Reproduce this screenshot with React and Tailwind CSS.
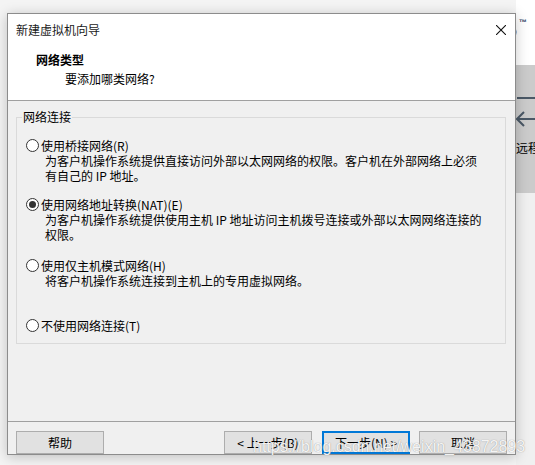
import React from 'react'

const Radio = ({ checked }) => (
    <span className="w-[13px] h-[13px] rounded-full border border-[#333333] bg-white flex items-center justify-center shrink-0">
        {checked && <span className="w-[7px] h-[7px] rounded-full bg-[#333333]" />}
    </span>
)

const Option = ({ label, checked, lines, className }) => (
    <div className={className}>
        <div className="flex items-center h-[15px] pl-[9px] gap-[2px]">
            <Radio checked={checked} />
            <span className="leading-[15px]">{label}</span>
        </div>
        {lines.map((t, i) => (
            <div key={i} className="pl-[28px] leading-[15px] h-[15px]">{t}</div>
        ))}
    </div>
)

const Button = ({ children, primary, className }) => (
    <button
        className={
            'w-[88px] h-[23px] bg-[#e1e1e1] text-[12px] leading-none text-black flex items-center justify-center ' +
            (primary ? 'border-2 border-[#0078d7] ' : 'border border-[#adadad] ') +
            (className || '')
        }
    >
        {children}
    </button>
)

const App = () => {
    return (
        <div className="relative w-[535px] h-[465px] overflow-hidden bg-[#f4f4f4] font-['Noto_Sans_CJK_SC',sans-serif] text-[12px] text-black">
            {/* background window peeking out on the right */}
            <div className="absolute left-[516px] top-0 w-[19px] h-full flex flex-col">
                <div className="relative h-[65px] bg-white">
                    <svg className="absolute left-[-3px] top-[26px]" width="5" height="12" viewBox="0 0 5 12">
                        <path d="M1 1 Q4 6 1 11" fill="none" stroke="#1e5fa8" strokeWidth="2" />
                    </svg>
                    <span className="absolute left-[3px] top-[19px] text-[8px] font-bold leading-none text-[#1f3a5f] font-['Liberation_Sans',sans-serif]">™</span>
                </div>
                <div className="h-[128px] bg-[#cbcbcb] flex flex-col">
                    <div className="mt-[32px] ml-[1px] h-[2px] bg-[#4a5866]" />
                    <svg className="mt-[12px]" width="19" height="16" viewBox="0 0 19 16">
                        <path d="M8 1 L1 8 L8 15 M1 8 H19" fill="none" stroke="#4a5866" strokeWidth="2" />
                    </svg>
                    <span className="mt-[13px] whitespace-nowrap leading-[15px]">远程</span>
                </div>
                <div className="flex-1 bg-[#f0f0f0]" />
            </div>

            {/* dialog window */}
            <div className="absolute left-[7px] top-[13px] w-[509px] h-[442px] border border-[#8c8c8c] bg-[#f0f0f0] flex flex-col shadow-[0_2px_12px_rgba(0,0,0,0.22)]">
                {/* header */}
                <div className="h-[88px] bg-white border-b border-[#a0a0a0] box-content pl-[8px] pr-[9px] pt-0 flex flex-col">
                    <div className="mt-[8px] h-[16px] flex items-center justify-between">
                        <span className="leading-[16px] text-[#1a1a1a]">新建虚拟机向导</span>
                        <svg width="10" height="10" viewBox="0 0 10 10">
                            <path d="M0 0 L10 10 M10 0 L0 10" stroke="#111" strokeWidth="1.1" />
                        </svg>
                    </div>
                    <div className="mt-[14px] ml-[20px] h-[16px] leading-[16px] font-bold">网络类型</div>
                    <div className="mt-[3px] ml-[49px] h-[16px] leading-[16px]">要添加哪类网络?</div>
                </div>

                {/* body */}
                <div className="h-[310px] pl-[8px] pr-[9px] pt-[16px] border-b border-[#a0a0a0] box-content">
                    <div className="relative border border-[#dadada] pt-[20px] pb-[10px]">
                        <span className="absolute left-[5px] top-[-9px] px-[1px] bg-[#f0f0f0] leading-[16px]">网络连接</span>
                        <Option
                            label="使用桥接网络(R)"
                            lines={['为客户机操作系统提供直接访问外部以太网网络的权限。客户机在外部网络上必须', '有自己的 IP 地址。']}
                        />
                        <Option
                            className="mt-[14px]"
                            checked
                            label="使用网络地址转换(NAT)(E)"
                            lines={['为客户机操作系统提供使用主机 IP 地址访问主机拨号连接或外部以太网网络连接的', '权限。']}
                        />
                        <Option
                            className="mt-[16px]"
                            label="使用仅主机模式网络(H)"
                            lines={['将客户机操作系统连接到主机上的专用虚拟网络。']}
                        />
                        <Option className="mt-[30px]" label="不使用网络连接(T)" lines={[]} />
                    </div>
                </div>

                {/* footer buttons */}
                <div className="flex-1 flex items-start pt-[9px] pl-[8px] pr-[8px]">
                    <Button>帮助</Button>
                    <div className="flex-1" />
                    <Button>&lt; 上一步(B)</Button>
                    <Button primary className="ml-[10px]">下一步(N) &gt;</Button>
                    <Button className="ml-[9px]">取消</Button>
                </div>
            </div>

            {/* blog watermark */}
            <span className="absolute left-[253px] top-[437px] text-[16px] leading-[19px] text-white/90 font-['Liberation_Sans',sans-serif] [text-shadow:0_0_1px_rgba(90,90,90,0.7)] whitespace-nowrap pointer-events-none">
                https://blog.csdn.net/weixin_43872893
            </span>
        </div>
    )
}

export default App
